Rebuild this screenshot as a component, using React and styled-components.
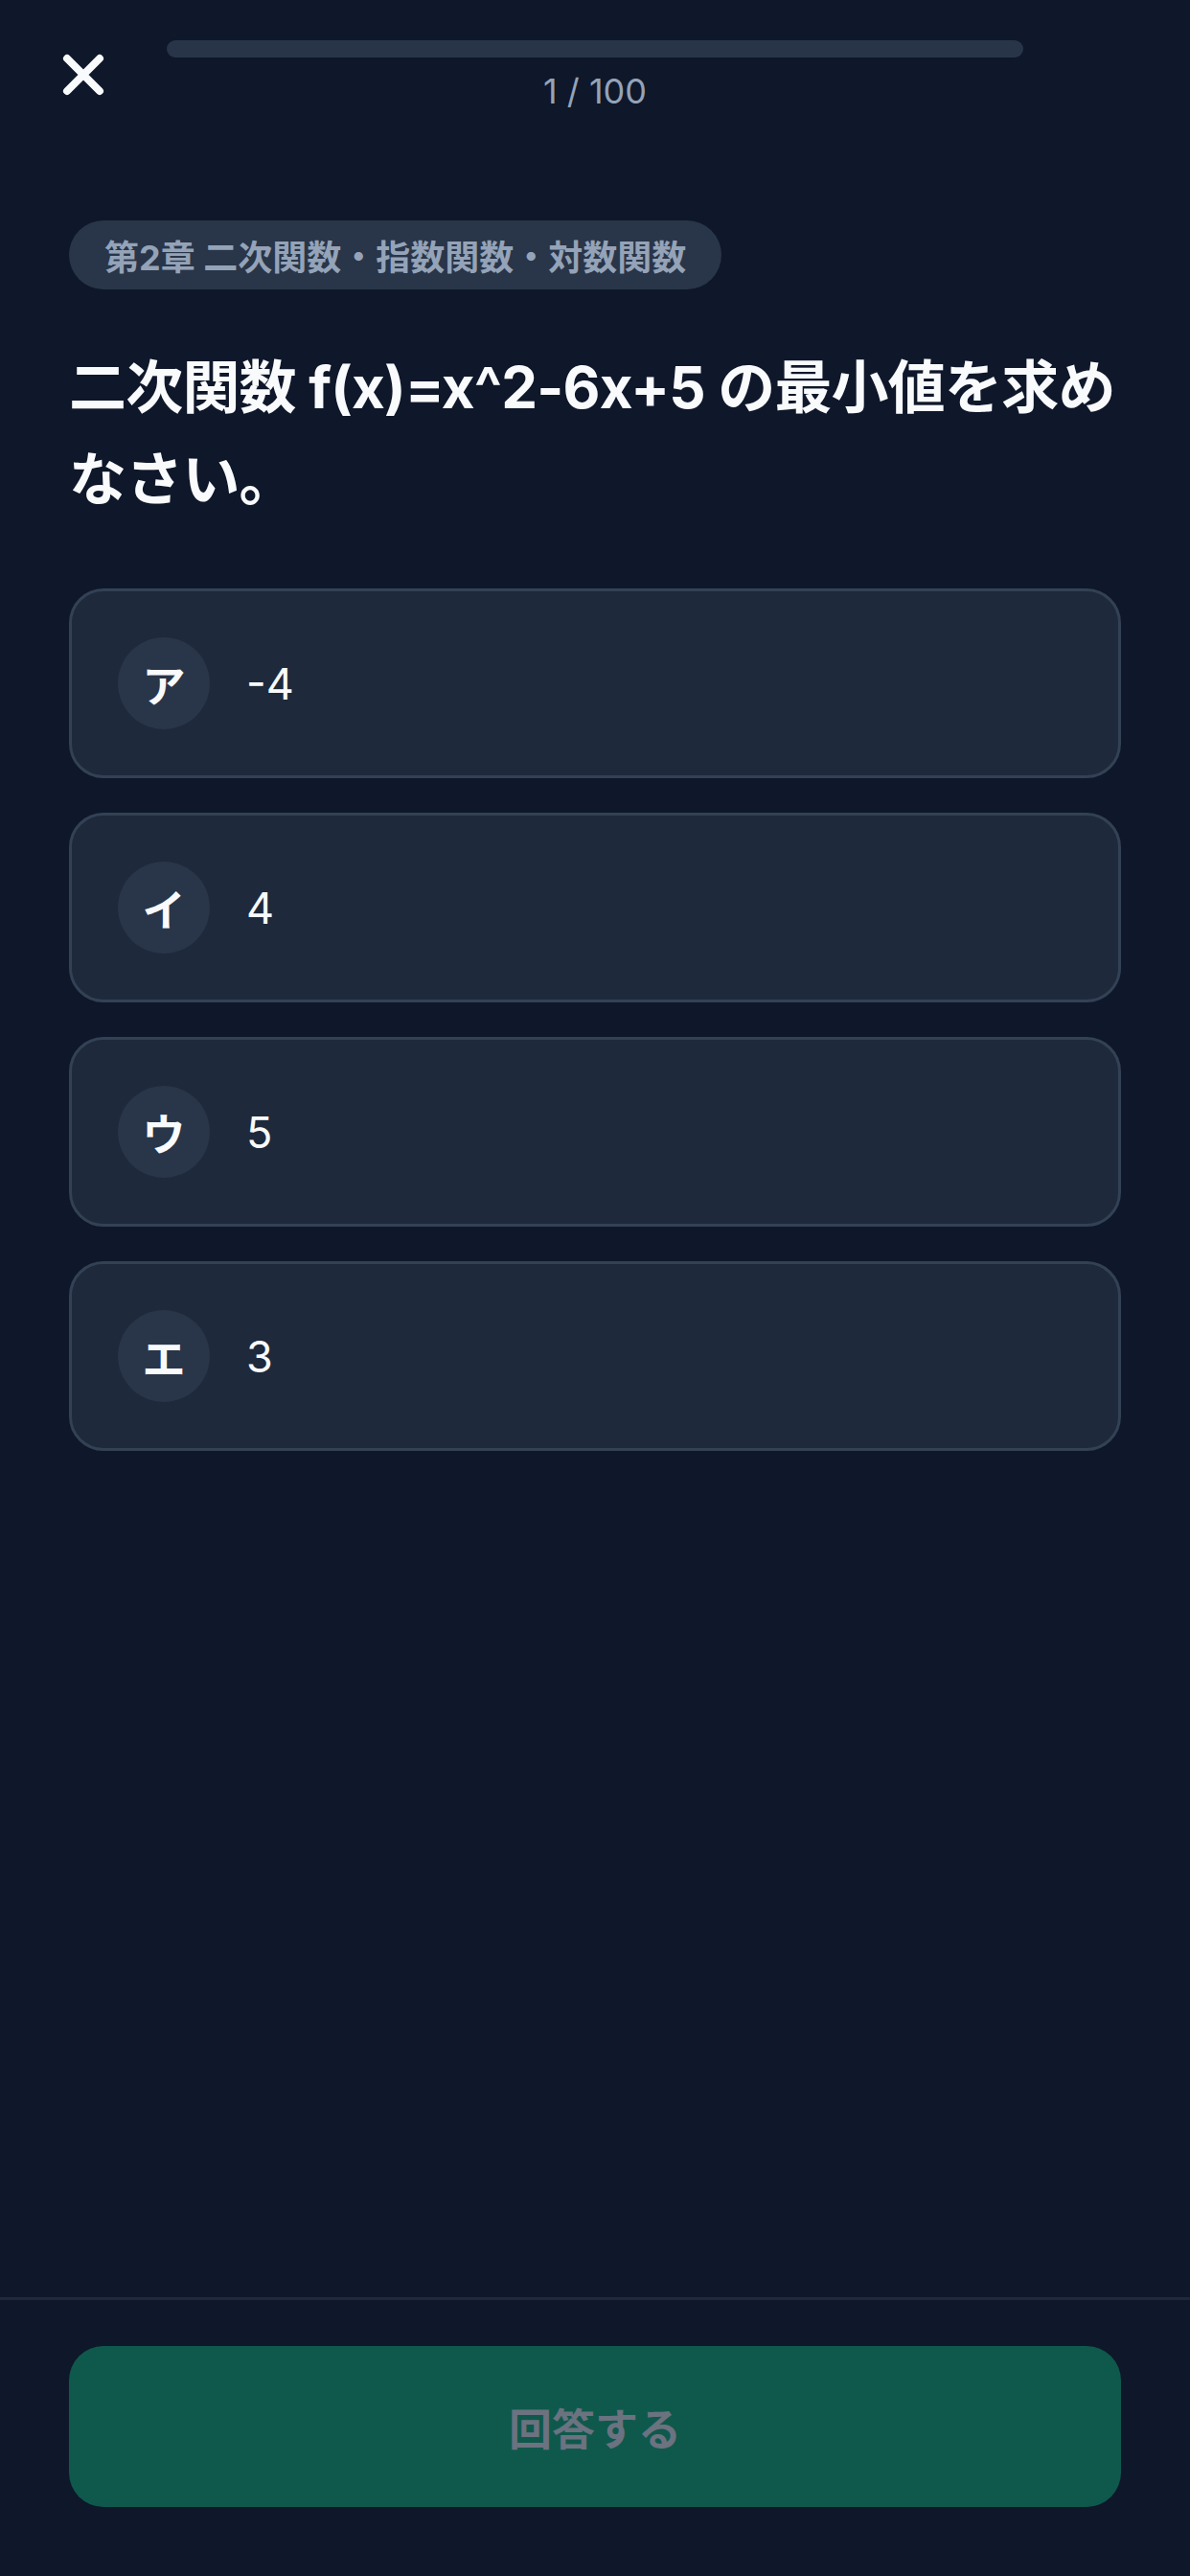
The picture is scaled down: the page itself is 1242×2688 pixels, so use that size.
import React, { useState } from 'react'
import styled, { createGlobalStyle } from 'styled-components'

const GlobalStyle = createGlobalStyle`
  html, body {
    margin: 0;
    padding: 0;
    background: #0f172a;
  }
  body {
    font-family: Inter, "Noto Sans CJK JP", sans-serif;
    -webkit-font-smoothing: antialiased;
  }
`

const Screen = styled.div`
  width: 1242px;
  height: 2688px;
  display: flex;
  flex-direction: column;
  background: #0f172a;
  color: #f8fafc;
`

const Header = styled.header`
  display: grid;
  grid-template-columns: 174px 1fr 174px;
  align-items: start;
  padding-top: 42px;
`

const CloseButton = styled.button`
  justify-self: center;
  width: 48px;
  height: 48px;
  margin-top: 12px;
  padding: 0;
  border: 0;
  background: none;
  display: flex;
  align-items: center;
  justify-content: center;
  cursor: pointer;
`

const Progress = styled.div`
  display: flex;
  flex-direction: column;
  align-items: center;
  gap: 10px;
`

const Track = styled.div`
  width: 100%;
  height: 18px;
  border-radius: 9px;
  background: #283548;
  overflow: hidden;
`

const Fill = styled.div`
  height: 100%;
  background: #10b981;
`

const Counter = styled.div`
  font-size: 36px;
  line-height: 50px;
  color: #94a3b8;
`

const Main = styled.main`
  flex: 1;
  padding: 110px 72px 0;
`

const Chip = styled.div`
  display: inline-flex;
  align-items: center;
  height: 72px;
  padding: 0 37px;
  border-radius: 36px;
  background: #293548;
  color: #94a3b8;
  font-size: 36px;
  font-weight: 700;
`

const Question = styled.h1`
  margin: 54px 0 66px;
  font-size: 60px;
  line-height: 96px;
  font-weight: 700;
  letter-spacing: -0.8px;
  color: #f8fafc;
`

const Options = styled.div`
  display: flex;
  flex-direction: column;
  gap: 36px;
`

const Option = styled.button`
  display: flex;
  align-items: center;
  gap: 38px;
  width: 100%;
  padding: 48px;
  border: 3px solid ${p => (p.$selected ? '#10b981' : '#334155')};
  border-radius: 36px;
  background: ${p => (p.$selected ? '#133b3a' : '#1e293b')};
  text-align: left;
  font-family: inherit;
  cursor: pointer;
`

const Badge = styled.span`
  flex: none;
  width: 96px;
  height: 96px;
  border-radius: 50%;
  background: #293548;
  display: flex;
  align-items: center;
  justify-content: center;
  color: #f8fafc;
  font-size: 45px;
  font-weight: 700;
`

const Answer = styled.span`
  color: #f8fafc;
  font-size: 45px;
`

const Footer = styled.footer`
  border-top: 3px solid #1e293b;
  padding: 48px 72px 72px;
`

const SubmitButton = styled.button`
  width: 100%;
  height: 168px;
  border: 0;
  border-radius: 36px;
  background: #0f594c;
  color: #6b7280;
  font-family: inherit;
  font-size: 45px;
  font-weight: 700;
`

const choices = [
  { mark: 'ア', text: '-4' },
  { mark: 'イ', text: '4' },
  { mark: 'ウ', text: '5' },
  { mark: 'エ', text: '3' },
]

const CloseIcon = () => (
  <svg width="48" height="48" viewBox="0 0 48 48">
    <path d="M7 7 L41 41 M41 7 L7 41" stroke="#f8fafc" strokeWidth="8" strokeLinecap="round" />
  </svg>
)

export default function App() {
  const [selected, setSelected] = useState(null)

  return (
    <Screen>
      <GlobalStyle />
      <Header>
        <CloseButton aria-label="閉じる"><CloseIcon /></CloseButton>
        <Progress>
          <Track><Fill style={{ width: '0%' }} /></Track>
          <Counter>1 / 100</Counter>
        </Progress>
      </Header>

      <Main>
        <Chip>第2章 二次関数・指数関数・対数関数</Chip>
        <Question>二次関数 f(x)=x^2-6x+5 の最小値を求めなさい。</Question>
        <Options>
          {choices.map((c, i) => (
            <Option key={c.mark} $selected={selected === i} onClick={() => setSelected(i)}>
              <Badge>{c.mark}</Badge>
              <Answer>{c.text}</Answer>
            </Option>
          ))}
        </Options>
      </Main>

      <Footer>
        <SubmitButton disabled={selected === null}>回答する</SubmitButton>
      </Footer>
    </Screen>
  )
}
